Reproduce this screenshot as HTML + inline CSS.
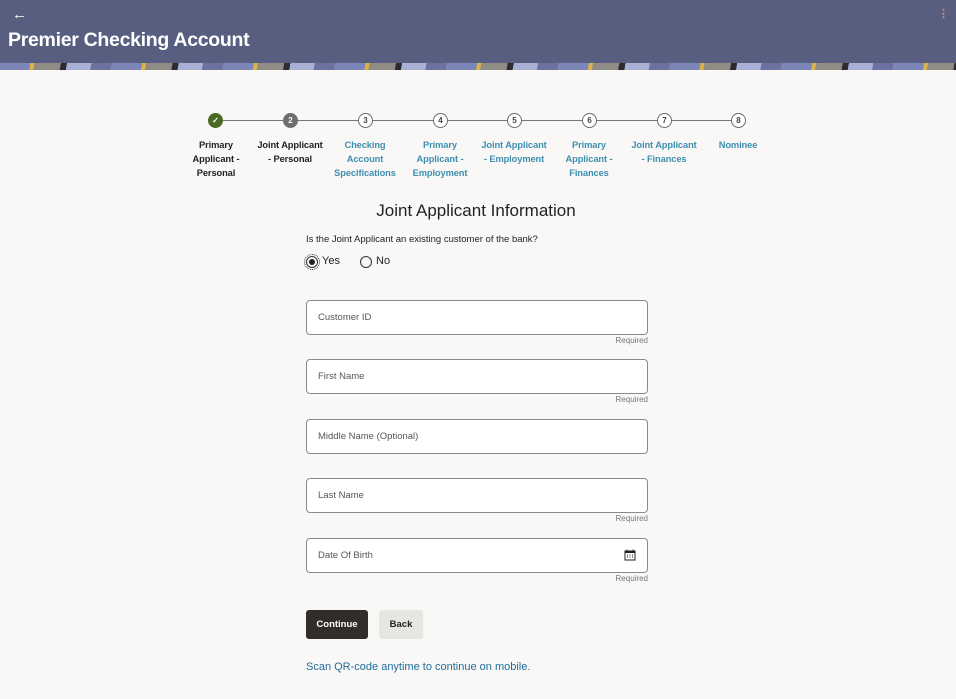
<!DOCTYPE html>
<html><head><style>
body{margin:0;width:956px;height:699px;background:#f9f8f6;font-family:"Liberation Sans",sans-serif;position:relative;overflow:hidden}
.hdr{position:absolute;left:0;top:0;width:956px;height:63px;background:#585e80}
.band{position:absolute;left:0;top:63px;width:956px;height:7px;background:repeating-linear-gradient(100deg,#7d86b8 0 30px,#d9b24a 30px 34px,#8f8c86 34px 60px,#2b2b30 60px 66px,#a8b0d6 66px 90px,#6b72a0 90px 110px)}
.t{position:absolute;color:#fff;font-weight:bold}
.c{position:absolute;width:13px;height:13px;border-radius:50%;border:1px solid #6b6b6b;background:#fff;font-size:8px;font-weight:bold;text-align:center;line-height:13px;color:#444;top:113px}
.ln{position:absolute;top:120px;height:1px;background:#777}
.lb{position:absolute;top:138px;width:80px;text-align:center;font-size:9.3px;font-weight:bold;line-height:14px;color:#3d8fb0;letter-spacing:-0.1px}
.in{position:absolute;left:306px;width:340px;height:33px;border:1px solid #8a8a8a;border-radius:4px;background:#fff}
.in span{position:absolute;left:11px;top:11px;font-size:9.5px;color:#555}
.rq{position:absolute;right:308px;font-size:8px;color:#777}
</style></head><body>
<div class="hdr"></div><div class="band"></div>
<div class="t" style="left:12px;top:6px;font-size:15px;font-weight:normal">←</div>
<div class="t" style="left:938px;top:7px;font-size:11px;color:#e08a6a">⋮</div>
<div class="t" style="left:8px;top:29px;font-size:19.5px;letter-spacing:-0.3px">Premier Checking Account</div>

<div class="ln" style="left:222px;width:510px"></div>
<div class="c" style="left:208px;background:#4a6a24;border-color:#4a6a24;color:#fff">✓</div>
<div class="c" style="left:283px;background:#6e6e6e;border-color:#6e6e6e;color:#fff">2</div>
<div class="c" style="left:358px">3</div><div class="c" style="left:433px">4</div><div class="c" style="left:507px">5</div><div class="c" style="left:582px">6</div><div class="c" style="left:657px">7</div><div class="c" style="left:731px">8</div>
<div class="lb" style="left:176px;color:#222">Primary<br>Applicant -<br>Personal</div>
<div class="lb" style="left:250px;color:#222">Joint Applicant<br>- Personal</div>
<div class="lb" style="left:325px">Checking<br>Account<br>Specifications</div>
<div class="lb" style="left:400px">Primary<br>Applicant -<br>Employment</div>
<div class="lb" style="left:474px">Joint Applicant<br>- Employment</div>
<div class="lb" style="left:549px">Primary<br>Applicant -<br>Finances</div>
<div class="lb" style="left:624px">Joint Applicant<br>- Finances</div>
<div class="lb" style="left:698px">Nominee</div>

<div style="position:absolute;left:306px;width:340px;top:201px;text-align:center;font-size:17px;color:#222">Joint Applicant Information</div>
<div style="position:absolute;left:306px;top:234px;font-size:9.5px;color:#222">Is the Joint Applicant an existing customer of the bank?</div>
<div style="position:absolute;left:306px;top:256px;width:10px;height:10px;border:1px solid #333;border-radius:50%;outline:1px dotted #333;outline-offset:1px"><div style="margin:2px;width:6px;height:6px;border-radius:50%;background:#222"></div></div>
<div style="position:absolute;left:322px;top:255px;font-size:11px;color:#222">Yes</div>
<div style="position:absolute;left:360px;top:256px;width:10px;height:10px;border:1px solid #333;border-radius:50%"></div>
<div style="position:absolute;left:376px;top:255px;font-size:11px;color:#222">No</div>

<div class="in" style="top:300px"><span>Customer ID</span></div><div class="rq" style="top:336px">Required</div>
<div class="in" style="top:359px"><span>First Name</span></div><div class="rq" style="top:395px">Required</div>
<div class="in" style="top:419px"><span>Middle Name (Optional)</span></div>
<div class="in" style="top:478px"><span>Last Name</span></div><div class="rq" style="top:514px">Required</div>
<div class="in" style="top:538px"><span>Date Of Birth</span>
<svg style="position:absolute;left:317px;top:10px" width="12" height="12" viewBox="0 0 12 12"><rect x="1" y="2" width="10" height="9" fill="none" stroke="#222"/><rect x="1" y="2" width="10" height="2" fill="#222"/><path d="M3 0.5v2M9 0.5v2" stroke="#222"/><path d="M3 6h1M5.5 6h1M8 6h1M3 8h1M5.5 8h1M8 8h1" stroke="#222"/></svg></div>
<div class="rq" style="top:574px">Required</div>

<div style="position:absolute;left:306px;top:610px;width:62px;height:29px;background:#312d2a;border-radius:3px;color:#fff;font-size:9.5px;font-weight:bold;text-align:center;line-height:30px">Continue</div>
<div style="position:absolute;left:379px;top:610px;width:44px;height:29px;background:#e8e6e3;border-radius:3px;color:#222;font-size:9.5px;font-weight:bold;text-align:center;line-height:30px">Back</div>
<div style="position:absolute;left:306px;top:661px;font-size:11px;color:#1f6c9c">Scan QR-code anytime to continue on mobile.</div>
</body></html>
